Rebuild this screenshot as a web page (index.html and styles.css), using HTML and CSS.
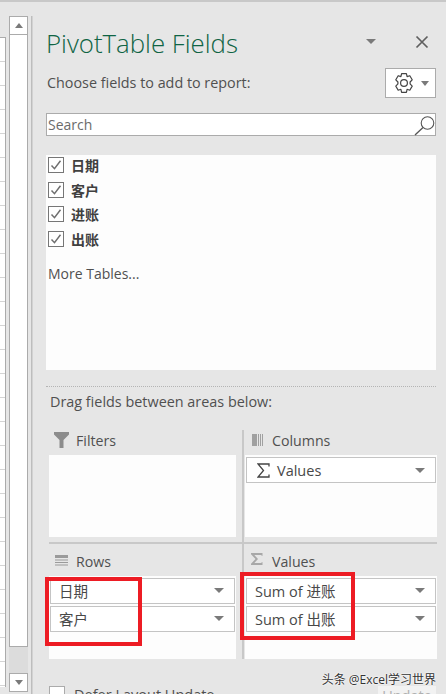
FILE: index.html
```html
<!DOCTYPE html>
<html lang="en">
<head>
<meta charset="utf-8">
<title>PivotTable Fields</title>
<link rel="stylesheet" href="styles.css">
</head>
<body>
<div class="app">
  <div class="sheet"></div>
  <div class="scrollbar">
    <div class="sb-btn"><span class="tri tri-up"></span></div>
    <div class="sb-thumb"></div>
    <div class="sb-track"></div>
    <div class="sb-btn"><span class="tri"></span></div>
  </div>
  <div class="splitter"></div>
  <main class="panel">
    <div class="title-row">
      <h1 class="title">PivotTable Fields</h1>
      <span class="tri tri-lg title-tri"></span>
      <svg class="close" width="14" height="14" viewBox="0 0 14 14"><path d="M1.5 1.5l11 11M12.5 1.5l-11 11" stroke="#5f5f5f" stroke-width="1.7" fill="none"/></svg>
    </div>
    <div class="choose-row">
      <span class="choose">Choose fields to add to report:</span>
      <div class="gear-btn">
        <svg width="22" height="22" viewBox="0 0 22 22"><path d="M8.6 1.6h4.8l.7 3 2.7-.9 2.4 4.1-2.1 2.2v1.9l2.1 2.2-2.4 4.1-2.7-.9-.7 3H8.6l-.7-3-2.7.9-2.4-4.1 2.1-2.2V10l-2.1-2.2 2.4-4.1 2.7.9z" fill="none" stroke="#444" stroke-width="1.2" stroke-linejoin="round"/><circle cx="11" cy="11" r="3.4" fill="none" stroke="#444" stroke-width="1.2"/></svg>
        <span class="tri"></span>
      </div>
    </div>
    <div class="search">
      <span class="search-text">Search</span>
      <svg class="search-icon" width="21" height="20" viewBox="0 0 21 20"><circle cx="13.5" cy="7" r="6.3" fill="none" stroke="#555" stroke-width="1.1"/><path d="M9 11.5L1 19" stroke="#555" stroke-width="1.3"/></svg>
    </div>
    <div class="fields">
      <label class="field"><span class="check"><svg width="12" height="12" viewBox="0 0 12 12"><path d="M1.5 6.5l3 3.2L10.5 1.8" fill="none" stroke="#6e6e6e" stroke-width="1.5"/></svg></span><b>日期</b></label>
      <label class="field"><span class="check"><svg width="12" height="12" viewBox="0 0 12 12"><path d="M1.5 6.5l3 3.2L10.5 1.8" fill="none" stroke="#6e6e6e" stroke-width="1.5"/></svg></span><b>客户</b></label>
      <label class="field"><span class="check"><svg width="12" height="12" viewBox="0 0 12 12"><path d="M1.5 6.5l3 3.2L10.5 1.8" fill="none" stroke="#6e6e6e" stroke-width="1.5"/></svg></span><b>进账</b></label>
      <label class="field"><span class="check"><svg width="12" height="12" viewBox="0 0 12 12"><path d="M1.5 6.5l3 3.2L10.5 1.8" fill="none" stroke="#6e6e6e" stroke-width="1.5"/></svg></span><b>出账</b></label>
      <div class="more">More Tables...</div>
    </div>
    <div class="dotted"></div>
    <div class="drag">Drag fields between areas below:</div>
    <div class="areas">
      <section class="area area-tl">
        <div class="area-head">
          <svg class="area-icon" width="15" height="16" viewBox="0 0 15 16"><path d="M0 0h15v2.5L9.5 8v8h-4V8L0 2.5z" fill="#8c8c8c"/></svg>
          <span>Filters</span>
        </div>
        <div class="box"></div>
      </section>
      <section class="area area-tr">
        <div class="area-head">
          <svg class="area-icon" width="11" height="12" viewBox="0 0 11 12"><path d="M0 0h5v12H0z" fill="#a0a0a0"/><path d="M6.500 0v12M8.500 0v12M10.500 0v12" stroke="#a0a0a0" fill="none"/></svg>
          <span>Columns</span>
        </div>
        <div class="box">
          <div class="pill pill-values"><svg class="pill-sigma" width="13" height="15" viewBox="0 0 13 15"><path d="M12 3.500V1H1l5.500 6.500L1 14h11v-2.500" fill="none" stroke="#444" stroke-width="1.300"/></svg><span>Values</span><span class="tri tri-lg"></span></div>
        </div>
      </section>
      <section class="area area-bl">
        <div class="area-head">
          <svg class="area-icon" width="13" height="11" viewBox="0 0 13 11"><path d="M0 0h13v3H0z" fill="#9a9a9a"/><path d="M0 5h13M0 7.500h13M0 10h13" stroke="#9a9a9a" fill="none"/></svg>
          <span>Rows</span>
        </div>
        <div class="box">
          <div class="pill"><span>日期</span><span class="tri tri-lg"></span></div>
          <div class="pill"><span>客户</span><span class="tri tri-lg"></span></div>
        </div>
        <div class="red red-left"></div>
      </section>
      <section class="area area-br">
        <div class="area-head">
          <svg class="area-icon" width="12" height="12" viewBox="0 0 12 12"><path d="M11.500 0H0v1.200L4.500 6 0 10.800V12h11.500V9L9.800 10H3.300L7 6 3.300 2h6.500l1.700 1z" fill="#a8a8a8"/></svg>
          <span>Values</span>
        </div>
        <div class="box">
          <div class="pill"><span>Sum of 进账</span><span class="tri tri-lg"></span></div>
          <div class="pill"><span>Sum of 出账</span><span class="tri tri-lg"></span></div>
        </div>
        <div class="red red-right"></div>
      </section>
    </div>
    <div class="footer">
      <span class="check check-empty"></span>
      <span class="defer">Defer Layout Update</span>
      <span class="update">Update</span>
    </div>
    <div class="watermark">头条 @Excel学习世界</div>
  </main>
</div>
</body>
</html>
```

FILE: styles.css
```css
* { box-sizing: border-box; }
html, body { margin: 0; height: 100%; overflow: hidden; }
body {
  background: #e6e6e6;
  color: #505050;
  font-family: "Open Sans", "Noto Sans CJK SC", sans-serif;
  font-size: 14px;
}
.app {
  display: flex;
  height: 694px;
  border-top: 2px solid #c8c8c8;
  overflow: hidden;
}
.sheet {
  width: 6px;
  height: 650px;
  flex: none;
  margin-top: 35px;
  border-top: 1px solid #ababab;
  border-right: 1px solid #ababab;
  background: repeating-linear-gradient(#fff 0, #fff 23px, #d4d4d4 23px, #d4d4d4 24px);
}
.scrollbar {
  width: 19px;
  height: 676px;
  flex: none;
  margin: 14px 0 0 3px;
  display: flex;
  flex-direction: column;
}
.sb-btn {
  height: 19px;
  flex: none;
  background: #fff;
  border: 1px solid #ababab;
  display: flex;
  align-items: center;
  justify-content: center;
}
.sb-thumb {
  height: 612px;
  flex: none;
  background: #fff;
  border: 1px solid #ababab;
  border-top: 0;
}
.sb-track { flex: 1; background: #dcdcdc; }
.tri {
  width: 0;
  height: 0;
  flex: none;
  border-left: 4.500px solid transparent;
  border-right: 4.500px solid transparent;
  border-top: 5px solid #7a7a7a;
}
.tri-up { border-top: 0; border-bottom: 5px solid #7a7a7a; }
.tri-lg {
  border-left-width: 5.500px;
  border-right-width: 5.500px;
  border-top-width: 5px;
}
.splitter {
  width: 2px;
  flex: none;
  margin-left: 3px;
  margin-top: 14px;
  background: #d2d2d2;
  border-left: 1px solid #bdbdbd;
}
.panel {
  position: relative;
  width: 413px;
  flex: none;
  padding: 25px 10px 0 13px;
  display: flex;
  flex-direction: column;
}
.title-row {
  height: 32px;
  margin-bottom: 1px;
  display: flex;
  align-items: center;
  flex: none;
}
.title {
  margin: 0;
  font-size: 25.800px;
  font-weight: 300;
  line-height: 32px;
  color: #0f6444;
  flex: 1;
}
.title-tri { margin: 0 39px 3px 0; }
.close { margin: 0 7px 3px 0; }
.choose-row {
  height: 30px;
  margin-top: 8px;
  display: flex;
  align-items: center;
  justify-content: space-between;
  flex: none;
}
.choose { margin: -2px 0 0 1px; font-size: 14.350px; }
.gear-btn {
  width: 51px;
  height: 30px;
  background: #fff;
  border: 1px solid #ababab;
  display: flex;
  align-items: center;
  gap: 6px;
  padding-left: 7px;
}
.search {
  height: 23px;
  margin-top: 15px;
  background: #fff;
  border: 1px solid #ababab;
  display: flex;
  align-items: center;
  justify-content: space-between;
  flex: none;
}
.search-text { margin-left: 1px; color: #6b6b6b; font-size: 14px; }
.search-icon { position: relative; top: 1px; }
.fields {
  height: 215px;
  margin-top: 19px;
  background: #fdfdfd;
  padding-left: 2px;
  display: flex;
  flex-direction: column;
  gap: 4.700px;
  flex: none;
}
.field {
  display: flex;
  align-items: center;
  gap: 7px;
  height: 20px;
  font-size: 14px;
  color: #404040;
  white-space: nowrap;
}
.check {
  width: 16px;
  height: 16px;
  flex: none;
  border: 1px solid #767676;
  background: #fff;
  display: flex;
  align-items: center;
  justify-content: center;
}
.more { margin-top: 9px; font-size: 14px; line-height: 22px; color: #505050; }
.dotted {
  margin-top: 16px;
  border-top: 1px dotted #b4b4b4;
  flex: none;
}
.drag {
  height: 18px;
  line-height: 18px;
  margin: 6px 0 0 4px;
  font-size: 14.400px;
  flex: none;
}
.areas {
  margin: 19px 0 0 3px;
  width: 388px;
  display: grid;
  grid-template-columns: 193px 195px;
  grid-template-rows: 114px 115px;
  flex: none;
}
.area { position: relative; display: flex; flex-direction: column; }
.area-tr, .area-br { border-left: 2px solid #c8c8c8; padding-left: 1px; }
.area-tl, .area-bl { padding-right: 6px; }
.area-tl, .area-tr { border-bottom: 2px solid #c8c8c8; padding-bottom: 5px; }
.area-head {
  height: 25px;
  padding: 0 0 4px 27px;
  display: flex;
  align-items: center;
  font-size: 14.200px;
  flex: none;
  position: relative;
}
.area-icon { position: absolute; left: 5px; top: 2px; }
.area-tr .area-icon { left: 7px; top: 4px; }
.area-bl .area-icon { left: 6px; top: 11px; }
.area-br .area-icon { left: 6px; top: 9px; }
.area-bl .area-head, .area-br .area-head { height: 32px; padding-top: 2px; padding-bottom: 0; }
.box {
  flex: 1;
  background: #fdfdfd;
  padding-top: 2px;
  padding-left: 1px;
}
.pill {
  height: 26px;
  width: 185px;
  margin-bottom: 2px;
  background: #fff;
  border: 1px solid #c4c4c4;
  display: flex;
  align-items: center;
  padding: 0 10px 1px 8px;
  font-size: 14.500px;
  color: #484848;
  white-space: nowrap;
}
.area-tr .pill, .area-br .pill { width: 190px; }
.area-tr .pill-values { padding-bottom: 0; }
.pill .tri { margin-left: auto; }
.pill-sigma { margin: 1px 7px 0 2px; }
.red {
  position: absolute;
  border: 4px solid #ed1c24;
  pointer-events: none;
}
.red-left { left: -4px; top: 33px; width: 97px; height: 69px; }
.red-right { left: -4px; top: 28px; width: 115px; height: 68px; }
.footer {
  position: relative;
  margin: 27px 0 0 3px;
  height: 20px;
  display: flex;
  gap: 9px;
  flex: none;
}
.check-empty { border-color: #ababab; }
.defer { line-height: 20px; font-size: 14.500px; margin-top: -1px; }
.update {
  position: absolute;
  right: 0;
  top: 0;
  width: 58px;
  height: 20px;
  background: #f2f2f2;
  color: #b0b0b0;
  font-size: 14.500px;
  line-height: 20px;
  text-align: center;
}
.watermark {
  position: absolute;
  right: 10px;
  top: 670px;
  font-size: 12px;
  line-height: 16px;
  color: #333;
  text-shadow: 0 0 2px #fff, 0 0 2px #fff;
  white-space: nowrap;
}
```
